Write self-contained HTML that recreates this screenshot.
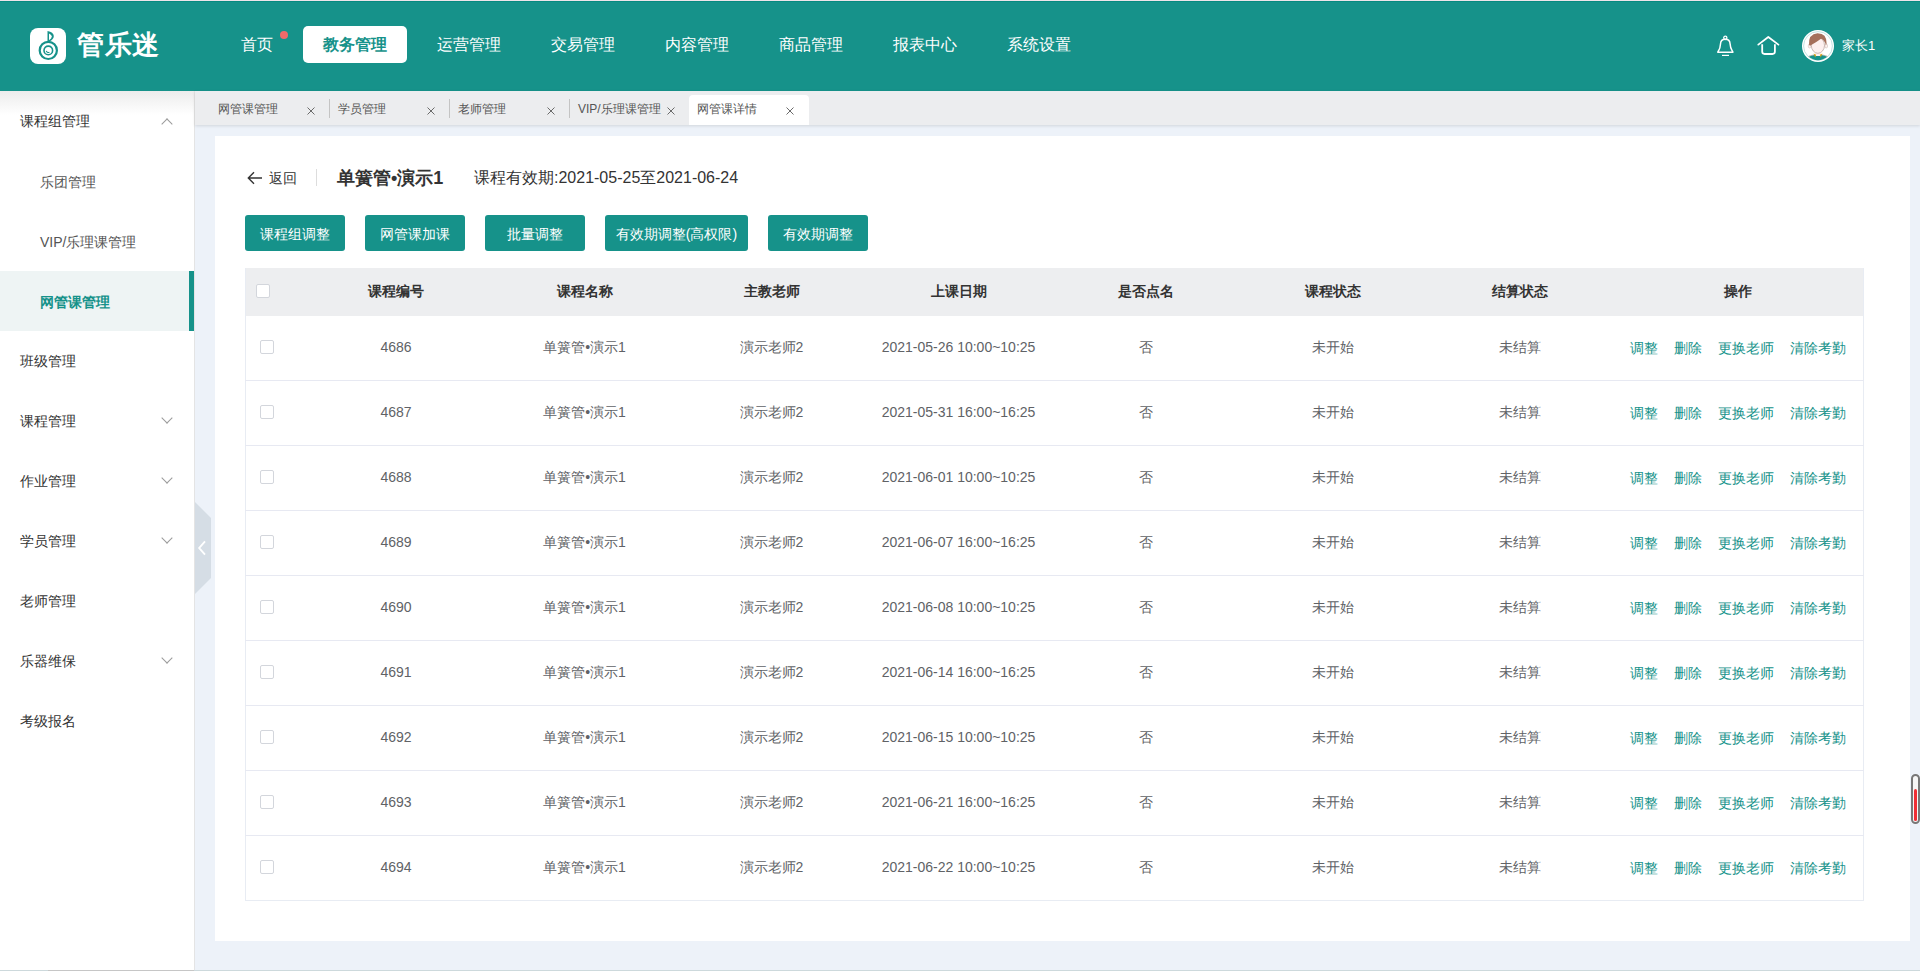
<!DOCTYPE html>
<html>
<head>
<meta charset="utf-8">
<style>
*{margin:0;padding:0;box-sizing:border-box;}
html,body{width:1920px;height:971px;overflow:hidden;}
body{font-family:"Liberation Sans",sans-serif;background:#edf2f9;position:relative;color:#333;}
.abs{position:absolute;}
#hdr{position:absolute;left:0;top:0;width:1920px;height:91px;background:#16928a;}
#hdr .topline{position:absolute;left:0;top:0;width:1920px;height:1px;background:#efe4ea;}
#hdr .topline2{position:absolute;left:0;top:1px;width:1920px;height:1px;background:#078a80;}
.logo-box{position:absolute;left:30px;top:28px;width:36px;height:36px;background:#fff;border-radius:8px;}
.logo-txt{position:absolute;left:77px;top:27px;font-size:27px;line-height:36px;color:#fff;letter-spacing:0.5px;font-weight:600;}
.nav{position:absolute;top:26px;height:37px;line-height:37px;font-size:16px;color:#fff;padding:0 20px;border-radius:5px;white-space:nowrap;}
.nav.act{background:#fff;color:#16928a;font-weight:bold;}
.reddot{position:absolute;left:280px;top:31px;width:8px;height:8px;border-radius:50%;background:#f06a6a;}
#side{position:absolute;left:0;top:91px;width:195px;height:880px;background:#fff;border-right:1px solid #e4e4e4;}
.mi{position:absolute;left:0;width:194px;height:60px;line-height:60px;font-size:14px;color:#333;padding-left:20px;white-space:nowrap;}
.mi.sub{padding-left:40px;color:#555;line-height:62px;}
.mi.act{background:#eef4f4;color:#16928a;font-weight:bold;}
.mi.act::after{content:"";position:absolute;right:0;top:0;width:5px;height:60px;background:#16928a;}
.caret{position:absolute;left:163px;top:26px;width:8px;height:8px;border-left:1px solid #9a9a9a;border-top:1px solid #9a9a9a;}
.caret.down{transform:rotate(225deg);top:23px;}
.caret.up{transform:rotate(45deg);top:29px;}
#tabs{position:absolute;left:195px;top:91px;width:1725px;height:34px;background:#ecedef;box-shadow:0 1px 3px rgba(0,0,0,0.12);}
.tab{position:absolute;top:4px;height:30px;}
.tab.act{background:#fff;border-radius:4px 4px 0 0;}
.tabx{position:absolute;top:0;font-size:13px;color:#777;}
.tsep{position:absolute;top:8px;width:1px;height:19px;background:#c4c4c4;}
#card{position:absolute;left:215px;top:136px;width:1695px;height:805px;background:#fff;}
.btn{position:absolute;top:215px;height:36px;line-height:36px;padding-top:1px;background:#16928a;color:#fff;font-size:14px;text-align:center;border-radius:3px;}
#tbl{position:absolute;left:245px;top:268px;width:1619px;}
.th{position:absolute;left:245px;top:268px;width:1619px;height:48px;background:#edeef0;}
.cell{position:absolute;text-align:center;font-size:14px;white-space:nowrap;}
.hcell{font-weight:bold;color:#333;}
.rcell{color:#606266;}
.cb{position:absolute;width:14px;height:14px;border:1px solid #d3d6dc;border-radius:2px;background:#fff;}
.rowline{position:absolute;left:245px;width:1619px;height:1px;background:#e7e9f2;}
.op{position:absolute;font-size:14px;color:#16928a;white-space:nowrap;}
.sideshadow{position:absolute;left:0;top:0;width:194px;height:24px;background:linear-gradient(#ececec,rgba(255,255,255,0));}
.handle{position:absolute;left:195px;top:490px;width:17px;height:120px;}
.handle svg{position:absolute;left:0;top:0;}
.scrollw{position:absolute;left:1911px;top:774px;width:9px;height:50px;border:2px solid #777;border-radius:5px;background:#f6f6f6;}
.scrollr{position:absolute;left:1px;top:13px;width:3px;height:32px;background:#ee2e35;border-radius:2px;}
.bline{position:absolute;left:0;top:970px;width:1920px;height:1px;background:#cdd9dc;}
.ttxt{position:absolute;top:11px;font-size:12px;line-height:14px;color:#555;white-space:nowrap;}
.tx{position:absolute;top:16px;}
</style>
</head>
<body>
<div id="hdr">
  <div class="topline"></div><div class="topline2"></div>
  <div class="logo-box"><svg width="36" height="36" viewBox="0 0 36 36" style="position:absolute;left:0;top:0;">
<circle cx="18.3" cy="22.4" r="8.6" fill="none" stroke="#16928a" stroke-width="2.2"/>
<circle cx="18.3" cy="22.4" r="4.3" fill="none" stroke="#16928a" stroke-width="1.6"/>
<path d="M16.2 22.8a2.2 2.2 0 0 0 3.2 1.4" fill="none" stroke="#16928a" stroke-width="1.1"/>
<path d="M17.5 3 L17.5 13.8 L19 13.8 Q24 11 23.8 8 Q23.5 4.2 17.5 3 Z" fill="#16928a"/>
<path d="M19 5.6 Q21.8 7.2 21.8 8.6 Q21.7 10.6 19 12.2 Z" fill="#fff"/>
</svg></div>
  <div class="logo-txt">管乐迷</div>
  <div class="nav" style="left:221px;">首页</div>
  <div class="reddot"></div>
  <div class="nav act" style="left:303px;">教务管理</div>
  <div class="nav" style="left:417px;">运营管理</div>
  <div class="nav" style="left:531px;">交易管理</div>
  <div class="nav" style="left:645px;">内容管理</div>
  <div class="nav" style="left:759px;">商品管理</div>
  <div class="nav" style="left:873px;">报表中心</div>
  <div class="nav" style="left:987px;">系统设置</div>
<svg class="abs" style="left:1714px;top:34px;" width="24" height="24" viewBox="0 0 24 24">
<ellipse cx="11.3" cy="3.8" rx="1.6" ry="1.7" fill="none" stroke="#fff" stroke-width="1.3"/>
<path d="M11.3 5.3 C8 5.3 6.6 7.5 6.5 10 C6.3 13 6.2 14.2 4.6 16.6 C3.6 18.2 3.6 18.3 4.4 18.3 L18.3 18.3 C19.1 18.3 19.1 18.2 18.1 16.6 C16.5 14.2 16.3 13 16.1 10 C16 7.5 14.6 5.3 11.3 5.3 Z" fill="none" stroke="#fff" stroke-width="1.5"/>
<path d="M8 21.4H15" stroke="#fff" stroke-width="1.2"/>
</svg>
<svg class="abs" style="left:1756px;top:34px;" width="26" height="24" viewBox="0 0 26 24">
<path d="M2.3 10.6 L12.3 3 L22.4 10.6" fill="none" stroke="#fff" stroke-width="1.8" stroke-linecap="round" stroke-linejoin="round"/>
<path d="M6.2 10.2 V17.6 Q6.2 20 8.6 20 H16.5 Q18.9 20 18.9 17.6 V10.2" fill="none" stroke="#fff" stroke-width="1.8"/>
</svg>
<svg class="abs" style="left:1801px;top:29px;" width="34" height="34" viewBox="0 0 34 34">
<defs><clipPath id="avc"><circle cx="17" cy="17" r="14.2"/></clipPath></defs>
<circle cx="17" cy="17" r="16" fill="#fff"/>
<circle cx="17" cy="17" r="14.4" fill="none" stroke="#a8d6d2" stroke-width="0.7"/>
<g clip-path="url(#avc)">
<path d="M2 36 Q4 27.5 13.5 26 L20.5 26 Q30 27.5 32 36 Z" fill="#16928a"/>
<path d="M5 28.5 Q9 26.3 13.5 25.8" fill="none" stroke="#8a7a74" stroke-width="0.5"/>
<path d="M29 28.5 Q25 26.3 20.5 25.8" fill="none" stroke="#8a7a74" stroke-width="0.5"/>
</g>
<rect x="14.2" y="22" width="5.6" height="5" fill="#fdf0ef"/>
<path d="M12.6 24.6 L15.2 25.8 L14.2 28.6 Z M21.4 24.6 L18.8 25.8 L19.8 28.6 Z" fill="#dda21a"/>
<ellipse cx="8.6" cy="17" rx="1.4" ry="2" fill="#fdf0ef" stroke="#b9a29a" stroke-width="0.4"/>
<ellipse cx="25.2" cy="17" rx="1.4" ry="2" fill="#fdf0ef" stroke="#b9a29a" stroke-width="0.4"/>
<ellipse cx="16.9" cy="16.3" rx="6.6" ry="8" fill="#fdf0ef" stroke="#8d6e64" stroke-width="0.45"/>
<path d="M8 15.8 Q7.2 5 16.6 4.2 Q25.8 4.2 25.6 14.5 L25 16.2 Q23.5 11 20 9.8 Q15.5 13.2 9 16.8 Z" fill="#a5705b"/>
</svg>
<div class="abs" style="left:1842px;top:38px;font-size:13px;line-height:16px;color:#fff;white-space:nowrap;">家长<span style="font-family:'Liberation Sans';">1</span></div>
</div>

<div id="side">
  <div class="sideshadow"></div>
  <div class="mi" style="top:0px;">课程组管理<span class="caret up"></span></div>
  <div class="mi sub" style="top:60px;">乐团管理</div>
  <div class="mi sub" style="top:120px;">VIP/乐理课管理</div>
  <div class="mi sub act" style="top:180px;">网管课管理</div>
  <div class="mi" style="top:240px;">班级管理</div>
  <div class="mi" style="top:300px;">课程管理<span class="caret down"></span></div>
  <div class="mi" style="top:360px;">作业管理<span class="caret down"></span></div>
  <div class="mi" style="top:420px;">学员管理<span class="caret down"></span></div>
  <div class="mi" style="top:480px;">老师管理</div>
  <div class="mi" style="top:540px;">乐器维保<span class="caret down"></span></div>
  <div class="mi" style="top:600px;">考级报名</div>
</div>
<div class="handle"><svg width="17" height="120" viewBox="0 0 17 120"><polygon points="0,12 16,28 16,88 0,104" fill="#d5dde5"/><path d="M10 51.3L4.2 58L10 64.7" fill="none" stroke="#fff" stroke-width="1.9"/></svg></div>

<div id="tabs">
<div class="tab act" style="left:494px;width:120px;"></div>
<div class="ttxt" style="left:23px;">网管课管理</div><svg class="tx" style="left:112.0px;" width="8" height="8" viewBox="0 0 8 8"><path d="M0.5 0.5L7.5 7.5M7.5 0.5L0.5 7.5" stroke="#6a6a6a" stroke-width="1"/></svg>
<div class="ttxt" style="left:143px;">学员管理</div><svg class="tx" style="left:232.0px;" width="8" height="8" viewBox="0 0 8 8"><path d="M0.5 0.5L7.5 7.5M7.5 0.5L0.5 7.5" stroke="#6a6a6a" stroke-width="1"/></svg>
<div class="ttxt" style="left:263px;">老师管理</div><svg class="tx" style="left:352.0px;" width="8" height="8" viewBox="0 0 8 8"><path d="M0.5 0.5L7.5 7.5M7.5 0.5L0.5 7.5" stroke="#6a6a6a" stroke-width="1"/></svg>
<div class="ttxt" style="left:383px;">VIP/乐理课管理</div><svg class="tx" style="left:472.0px;" width="8" height="8" viewBox="0 0 8 8"><path d="M0.5 0.5L7.5 7.5M7.5 0.5L0.5 7.5" stroke="#6a6a6a" stroke-width="1"/></svg>
<div class="ttxt" style="left:502px;">网管课详情</div><svg class="tx" style="left:591.0px;" width="8" height="8" viewBox="0 0 8 8"><path d="M0.5 0.5L7.5 7.5M7.5 0.5L0.5 7.5" stroke="#6a6a6a" stroke-width="1"/></svg>
<div class="tsep" style="left:134px;"></div>
<div class="tsep" style="left:254px;"></div>
<div class="tsep" style="left:374px;"></div>
</div>

<div id="card"></div>
<div class="abs back" style="left:246px;top:168px;font-size:14px;line-height:20px;color:#333;"><svg width="16" height="14" viewBox="0 0 16 14" style="position:absolute;left:1px;top:3px;"><path d="M15 7H1.5M7 1.2L1.3 7l5.7 5.8" fill="none" stroke="#333" stroke-width="1.4"/></svg><span style="position:absolute;left:23px;top:0;white-space:nowrap;">返回</span></div>
<div class="abs" style="left:316px;top:169px;width:1px;height:17px;background:#ddd;"></div>
<div class="abs" style="left:337px;top:165px;font-size:18px;line-height:26px;font-weight:bold;color:#333;white-space:nowrap;">单簧管•演示1</div>
<div class="abs" style="left:474px;top:166px;font-size:16px;line-height:24px;color:#333;white-space:nowrap;">课程有效期:2021-05-25至2021-06-24</div>
<div class="btn" style="left:245px;width:100px;">课程组调整</div>
<div class="btn" style="left:365px;width:100px;">网管课加课</div>
<div class="btn" style="left:485px;width:100px;">批量调整</div>
<div class="btn" style="left:605px;width:143px;">有效期调整(高权限)</div>
<div class="btn" style="left:768px;width:100px;">有效期调整</div>
<div class="th"></div>
<div class="abs tblborder" style="left:245px;top:268px;width:1619px;height:633px;border:1px solid #e8ecf3;border-top:none;"></div>
<div class="cb" style="left:256px;top:284px;"></div>
<div class="cell hcell" style="left:302px;width:188px;top:281px;line-height:20px;">课程编号</div>
<div class="cell hcell" style="left:491px;width:187px;top:281px;line-height:20px;">课程名称</div>
<div class="cell hcell" style="left:678px;width:187px;top:281px;line-height:20px;">主教老师</div>
<div class="cell hcell" style="left:865px;width:187px;top:281px;line-height:20px;">上课日期</div>
<div class="cell hcell" style="left:1052px;width:187px;top:281px;line-height:20px;">是否点名</div>
<div class="cell hcell" style="left:1239px;width:187px;top:281px;line-height:20px;">课程状态</div>
<div class="cell hcell" style="left:1426px;width:187px;top:281px;line-height:20px;">结算状态</div>
<div class="cell hcell" style="left:1612px;width:252px;top:281px;line-height:20px;">操作</div>
<div class="cb" style="left:260px;top:340px;"></div>
<div class="cell rcell" style="left:302px;width:188px;top:337px;line-height:20px;">4686</div>
<div class="cell rcell" style="left:491px;width:187px;top:337px;line-height:20px;">单簧管•演示1</div>
<div class="cell rcell" style="left:678px;width:187px;top:337px;line-height:20px;">演示老师2</div>
<div class="cell rcell" style="left:865px;width:187px;top:337px;line-height:20px;">2021-05-26 10:00~10:25</div>
<div class="cell rcell" style="left:1052px;width:187px;top:337px;line-height:20px;">否</div>
<div class="cell rcell" style="left:1239px;width:187px;top:337px;line-height:20px;">未开始</div>
<div class="cell rcell" style="left:1426px;width:187px;top:337px;line-height:20px;">未结算</div>
<div class="op" style="left:1630px;top:338px;line-height:20px;">调整</div><div class="op" style="left:1674px;top:338px;line-height:20px;">删除</div><div class="op" style="left:1718px;top:338px;line-height:20px;">更换老师</div><div class="op" style="left:1790px;top:338px;line-height:20px;">清除考勤</div>
<div class="rowline" style="top:380px;"></div>
<div class="cb" style="left:260px;top:405px;"></div>
<div class="cell rcell" style="left:302px;width:188px;top:402px;line-height:20px;">4687</div>
<div class="cell rcell" style="left:491px;width:187px;top:402px;line-height:20px;">单簧管•演示1</div>
<div class="cell rcell" style="left:678px;width:187px;top:402px;line-height:20px;">演示老师2</div>
<div class="cell rcell" style="left:865px;width:187px;top:402px;line-height:20px;">2021-05-31 16:00~16:25</div>
<div class="cell rcell" style="left:1052px;width:187px;top:402px;line-height:20px;">否</div>
<div class="cell rcell" style="left:1239px;width:187px;top:402px;line-height:20px;">未开始</div>
<div class="cell rcell" style="left:1426px;width:187px;top:402px;line-height:20px;">未结算</div>
<div class="op" style="left:1630px;top:403px;line-height:20px;">调整</div><div class="op" style="left:1674px;top:403px;line-height:20px;">删除</div><div class="op" style="left:1718px;top:403px;line-height:20px;">更换老师</div><div class="op" style="left:1790px;top:403px;line-height:20px;">清除考勤</div>
<div class="rowline" style="top:445px;"></div>
<div class="cb" style="left:260px;top:470px;"></div>
<div class="cell rcell" style="left:302px;width:188px;top:467px;line-height:20px;">4688</div>
<div class="cell rcell" style="left:491px;width:187px;top:467px;line-height:20px;">单簧管•演示1</div>
<div class="cell rcell" style="left:678px;width:187px;top:467px;line-height:20px;">演示老师2</div>
<div class="cell rcell" style="left:865px;width:187px;top:467px;line-height:20px;">2021-06-01 10:00~10:25</div>
<div class="cell rcell" style="left:1052px;width:187px;top:467px;line-height:20px;">否</div>
<div class="cell rcell" style="left:1239px;width:187px;top:467px;line-height:20px;">未开始</div>
<div class="cell rcell" style="left:1426px;width:187px;top:467px;line-height:20px;">未结算</div>
<div class="op" style="left:1630px;top:468px;line-height:20px;">调整</div><div class="op" style="left:1674px;top:468px;line-height:20px;">删除</div><div class="op" style="left:1718px;top:468px;line-height:20px;">更换老师</div><div class="op" style="left:1790px;top:468px;line-height:20px;">清除考勤</div>
<div class="rowline" style="top:510px;"></div>
<div class="cb" style="left:260px;top:535px;"></div>
<div class="cell rcell" style="left:302px;width:188px;top:532px;line-height:20px;">4689</div>
<div class="cell rcell" style="left:491px;width:187px;top:532px;line-height:20px;">单簧管•演示1</div>
<div class="cell rcell" style="left:678px;width:187px;top:532px;line-height:20px;">演示老师2</div>
<div class="cell rcell" style="left:865px;width:187px;top:532px;line-height:20px;">2021-06-07 16:00~16:25</div>
<div class="cell rcell" style="left:1052px;width:187px;top:532px;line-height:20px;">否</div>
<div class="cell rcell" style="left:1239px;width:187px;top:532px;line-height:20px;">未开始</div>
<div class="cell rcell" style="left:1426px;width:187px;top:532px;line-height:20px;">未结算</div>
<div class="op" style="left:1630px;top:533px;line-height:20px;">调整</div><div class="op" style="left:1674px;top:533px;line-height:20px;">删除</div><div class="op" style="left:1718px;top:533px;line-height:20px;">更换老师</div><div class="op" style="left:1790px;top:533px;line-height:20px;">清除考勤</div>
<div class="rowline" style="top:575px;"></div>
<div class="cb" style="left:260px;top:600px;"></div>
<div class="cell rcell" style="left:302px;width:188px;top:597px;line-height:20px;">4690</div>
<div class="cell rcell" style="left:491px;width:187px;top:597px;line-height:20px;">单簧管•演示1</div>
<div class="cell rcell" style="left:678px;width:187px;top:597px;line-height:20px;">演示老师2</div>
<div class="cell rcell" style="left:865px;width:187px;top:597px;line-height:20px;">2021-06-08 10:00~10:25</div>
<div class="cell rcell" style="left:1052px;width:187px;top:597px;line-height:20px;">否</div>
<div class="cell rcell" style="left:1239px;width:187px;top:597px;line-height:20px;">未开始</div>
<div class="cell rcell" style="left:1426px;width:187px;top:597px;line-height:20px;">未结算</div>
<div class="op" style="left:1630px;top:598px;line-height:20px;">调整</div><div class="op" style="left:1674px;top:598px;line-height:20px;">删除</div><div class="op" style="left:1718px;top:598px;line-height:20px;">更换老师</div><div class="op" style="left:1790px;top:598px;line-height:20px;">清除考勤</div>
<div class="rowline" style="top:640px;"></div>
<div class="cb" style="left:260px;top:665px;"></div>
<div class="cell rcell" style="left:302px;width:188px;top:662px;line-height:20px;">4691</div>
<div class="cell rcell" style="left:491px;width:187px;top:662px;line-height:20px;">单簧管•演示1</div>
<div class="cell rcell" style="left:678px;width:187px;top:662px;line-height:20px;">演示老师2</div>
<div class="cell rcell" style="left:865px;width:187px;top:662px;line-height:20px;">2021-06-14 16:00~16:25</div>
<div class="cell rcell" style="left:1052px;width:187px;top:662px;line-height:20px;">否</div>
<div class="cell rcell" style="left:1239px;width:187px;top:662px;line-height:20px;">未开始</div>
<div class="cell rcell" style="left:1426px;width:187px;top:662px;line-height:20px;">未结算</div>
<div class="op" style="left:1630px;top:663px;line-height:20px;">调整</div><div class="op" style="left:1674px;top:663px;line-height:20px;">删除</div><div class="op" style="left:1718px;top:663px;line-height:20px;">更换老师</div><div class="op" style="left:1790px;top:663px;line-height:20px;">清除考勤</div>
<div class="rowline" style="top:705px;"></div>
<div class="cb" style="left:260px;top:730px;"></div>
<div class="cell rcell" style="left:302px;width:188px;top:727px;line-height:20px;">4692</div>
<div class="cell rcell" style="left:491px;width:187px;top:727px;line-height:20px;">单簧管•演示1</div>
<div class="cell rcell" style="left:678px;width:187px;top:727px;line-height:20px;">演示老师2</div>
<div class="cell rcell" style="left:865px;width:187px;top:727px;line-height:20px;">2021-06-15 10:00~10:25</div>
<div class="cell rcell" style="left:1052px;width:187px;top:727px;line-height:20px;">否</div>
<div class="cell rcell" style="left:1239px;width:187px;top:727px;line-height:20px;">未开始</div>
<div class="cell rcell" style="left:1426px;width:187px;top:727px;line-height:20px;">未结算</div>
<div class="op" style="left:1630px;top:728px;line-height:20px;">调整</div><div class="op" style="left:1674px;top:728px;line-height:20px;">删除</div><div class="op" style="left:1718px;top:728px;line-height:20px;">更换老师</div><div class="op" style="left:1790px;top:728px;line-height:20px;">清除考勤</div>
<div class="rowline" style="top:770px;"></div>
<div class="cb" style="left:260px;top:795px;"></div>
<div class="cell rcell" style="left:302px;width:188px;top:792px;line-height:20px;">4693</div>
<div class="cell rcell" style="left:491px;width:187px;top:792px;line-height:20px;">单簧管•演示1</div>
<div class="cell rcell" style="left:678px;width:187px;top:792px;line-height:20px;">演示老师2</div>
<div class="cell rcell" style="left:865px;width:187px;top:792px;line-height:20px;">2021-06-21 16:00~16:25</div>
<div class="cell rcell" style="left:1052px;width:187px;top:792px;line-height:20px;">否</div>
<div class="cell rcell" style="left:1239px;width:187px;top:792px;line-height:20px;">未开始</div>
<div class="cell rcell" style="left:1426px;width:187px;top:792px;line-height:20px;">未结算</div>
<div class="op" style="left:1630px;top:793px;line-height:20px;">调整</div><div class="op" style="left:1674px;top:793px;line-height:20px;">删除</div><div class="op" style="left:1718px;top:793px;line-height:20px;">更换老师</div><div class="op" style="left:1790px;top:793px;line-height:20px;">清除考勤</div>
<div class="rowline" style="top:835px;"></div>
<div class="cb" style="left:260px;top:860px;"></div>
<div class="cell rcell" style="left:302px;width:188px;top:857px;line-height:20px;">4694</div>
<div class="cell rcell" style="left:491px;width:187px;top:857px;line-height:20px;">单簧管•演示1</div>
<div class="cell rcell" style="left:678px;width:187px;top:857px;line-height:20px;">演示老师2</div>
<div class="cell rcell" style="left:865px;width:187px;top:857px;line-height:20px;">2021-06-22 10:00~10:25</div>
<div class="cell rcell" style="left:1052px;width:187px;top:857px;line-height:20px;">否</div>
<div class="cell rcell" style="left:1239px;width:187px;top:857px;line-height:20px;">未开始</div>
<div class="cell rcell" style="left:1426px;width:187px;top:857px;line-height:20px;">未结算</div>
<div class="op" style="left:1630px;top:858px;line-height:20px;">调整</div><div class="op" style="left:1674px;top:858px;line-height:20px;">删除</div><div class="op" style="left:1718px;top:858px;line-height:20px;">更换老师</div><div class="op" style="left:1790px;top:858px;line-height:20px;">清除考勤</div>
<div class="scrollw"><div class="scrollr"></div></div>
<div class="bline"></div><div class="abs" style="left:48px;top:970px;width:146px;height:1px;background:#c6c6c6;"></div>

</body>
</html>
